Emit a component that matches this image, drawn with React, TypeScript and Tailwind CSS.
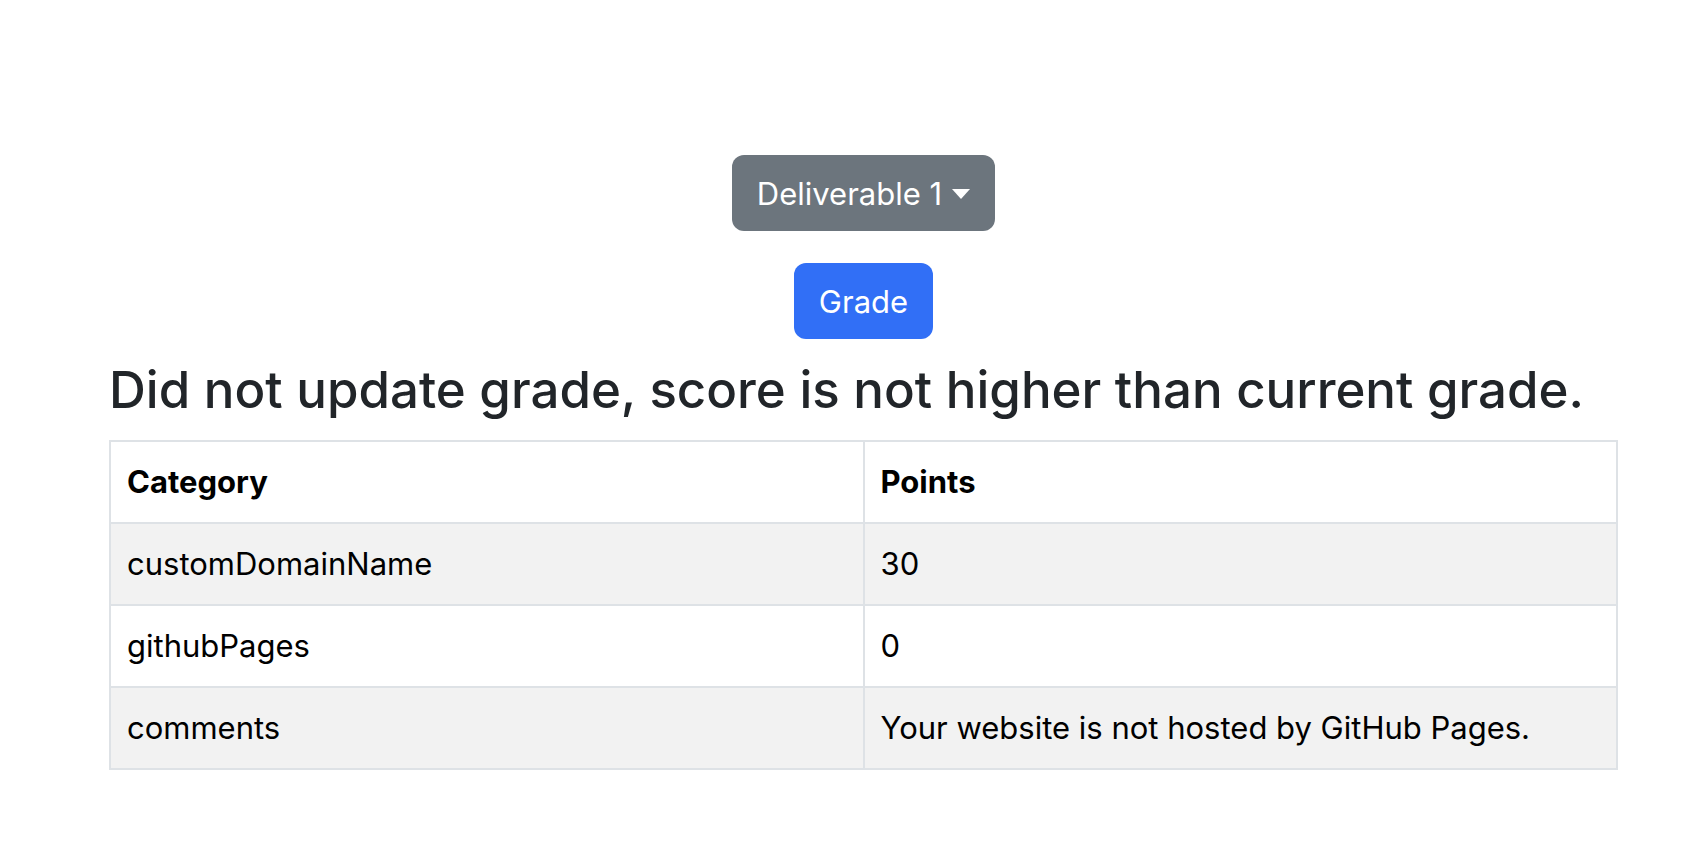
import { useState } from "react";

const rows = [
	{ category: "customDomainName", points: "30" },
	{ category: "githubPages", points: "0" },
	{ category: "comments", points: "Your website is not hosted by GitHub Pages." },
];

export default function App() {
	const [deliverable] = useState("Deliverable 1");

	return (
		<div className="min-h-screen bg-white font-['Inter',sans-serif] text-[#212529]">
			<div className="flex flex-col items-center pt-[155px] pl-[109px] pr-[82px]">
				<button
					type="button"
					className="flex items-center h-[76px] px-[25px] rounded-[12px] bg-[#6c757d] text-white text-[31px] leading-none"
				>
					{deliverable}
					<span className="ml-[10px] mt-[2px] w-0 h-0 border-x-[9px] border-x-transparent border-t-[10px] border-t-white" />
				</button>

				<button
					type="button"
					className="mt-[32px] h-[76px] px-[25px] rounded-[12px] bg-[#316ff6] text-white text-[31px] leading-none"
				>
					Grade
				</button>

				<h4 className="self-stretch mt-[20px] mb-[20px] text-[51px] font-medium leading-[61px]">
					Did not update grade, score is not higher than current grade.
				</h4>

				<table className="w-full table-fixed border-collapse border-2 border-[#dee2e6] text-[31px] text-black">
					<thead>
						<tr className="h-[82px]">
							<th className="border-2 border-[#dee2e6] px-[16px] text-left font-bold">Category</th>
							<th className="border-2 border-[#dee2e6] px-[16px] text-left font-bold">Points</th>
						</tr>
					</thead>
					<tbody>
						{rows.map((row, i) => (
							<tr key={row.category} className={i % 2 === 0 ? "h-[82px] bg-[#f2f2f2]" : "h-[82px] bg-white"}>
								<td className="border-2 border-[#dee2e6] px-[16px]">{row.category}</td>
								<td className="border-2 border-[#dee2e6] px-[16px]">{row.points}</td>
							</tr>
						))}
					</tbody>
				</table>
			</div>
		</div>
	);
}
